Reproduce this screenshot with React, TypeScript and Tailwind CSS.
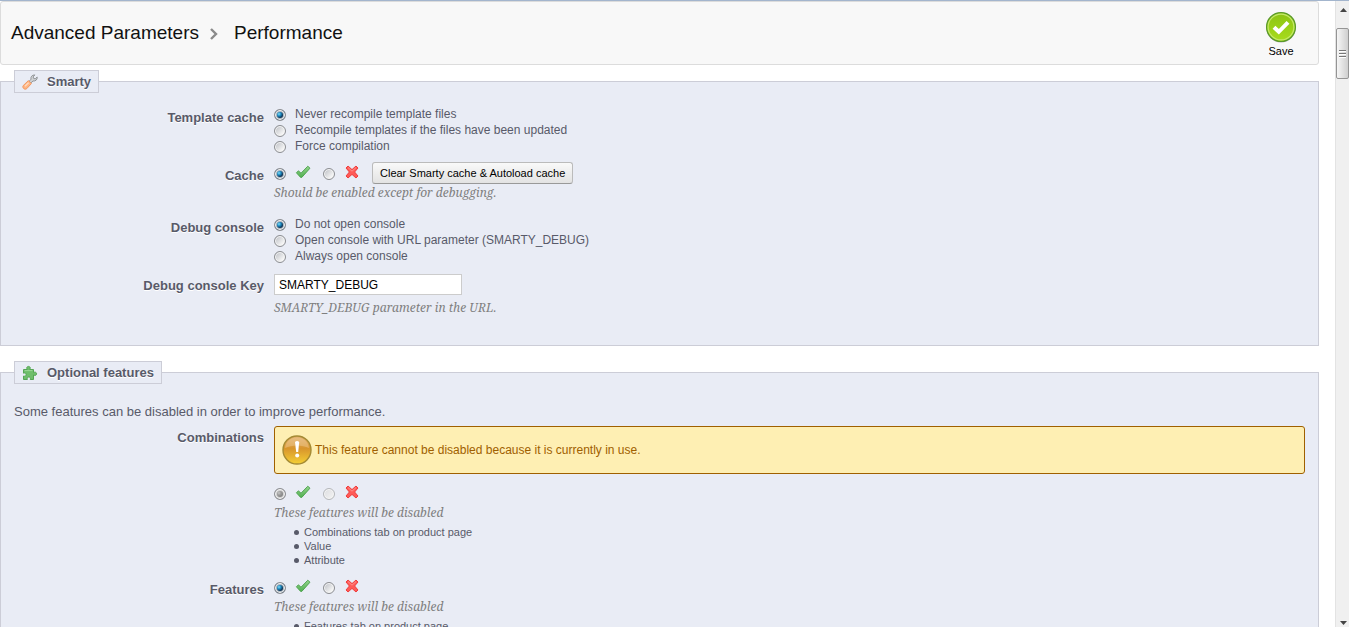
import React from 'react';

interface RadioProps {
  name: string;
  label?: string;
  checked?: boolean;
  disabled?: boolean;
}

const Radio: React.FC<RadioProps> = ({ name, label, checked, disabled }) => (
  <input
    type="radio"
    name={name}
    aria-label={label}
    defaultChecked={checked}
    disabled={disabled}
    className="mt-0.5 size-3 shrink-0 appearance-none rounded-full border border-[#8c8e92] bg-[linear-gradient(135deg,#b9bcc2,#f4f4f4_75%)] shadow-[inset_0_0_0_1px_#f6f6f6] checked:bg-[radial-gradient(circle_at_4px_4px,#7fe0fb_0px,#1c86bd_2px,#0c2c4c_4px)] checked:shadow-[inset_0_0_0_1px_#f6f6f6,inset_0_0_0_2px_#a9b4be] disabled:border-[#b5b7ba] disabled:bg-[linear-gradient(135deg,#dcdde0,#f4f4f4)] disabled:checked:border-[#8c8e92] disabled:checked:bg-[radial-gradient(circle_at_4px_4px,#c8c8c8_0px,#9c9c9c_2px,#858585_4px)] disabled:checked:shadow-[inset_0_0_0_1px_#f6f6f6,inset_0_0_0_2px_#d0d0d0]"
  />
);

const CheckIcon = () => (
  <svg width="16" height="16" viewBox="0 0 16 16" className="mb-0.5" aria-hidden="true">
    <defs>
      <linearGradient id="check" x1="0" y1="0" x2="0" y2="1">
        <stop offset="0" stopColor="#93d48a" />
        <stop offset="1" stopColor="#52b052" />
      </linearGradient>
    </defs>
    <path
      d="M1.4 8.8 3.4 6.8 6 9.2 12.8 2.2 15 4.2 6.8 13.4 5.6 13.4Z"
      fill="url(#check)"
      stroke="#4a9f4b"
      strokeWidth=".9"
      strokeLinejoin="round"
    />
  </svg>
);

const CrossIcon = () => (
  <svg width="16" height="16" viewBox="0 0 16 16" className="mb-0.5" aria-hidden="true">
    <path
      d="M4 2 8 5.6 12 2 14 4 10.6 8 14 12 12 14 8 10.4 4 14 2 12 5.4 8 2 4Z"
      fill="#ff5a56"
      stroke="#ee3e3e"
      strokeLinejoin="round"
    />
    <path d="M4 3.6 8 7.2 12 3.6" fill="none" stroke="#ff8f8a" />
  </svg>
);

const WrenchIcon = () => (
  <svg width="16" height="16" viewBox="0 0 16 16" aria-hidden="true">
    <path
      d="M7 7.4 9 5.2C8.4 3 10 .8 12.8.9L11.2 2.9 11.6 4.4 13.2 4.8 15.2 3C15.6 5.6 13.4 7.4 11 7L8.8 9Z"
      fill="#d0d2d4"
      stroke="#8b8e92"
      strokeWidth=".9"
      strokeLinejoin="round"
    />
    <path d="M6.4 6.6 9.4 9.6 4.8 14.6C2.8 16.4-.2 13.8 1.2 11.6Z" fill="#ffb583" stroke="#f0935a" strokeWidth=".9" />
    <path d="M3 12.2 6.6 8.7" stroke="#ffdcc2" strokeWidth="1.2" />
  </svg>
);

const PuzzleIcon = () => (
  <svg width="16" height="16" viewBox="0 0 16 16" aria-hidden="true">
    <path
      d="M1.5 4.5H5.2C4.2 2.6 5 1.4 6.5 1.4S8.8 2.6 7.8 4.5H11.5V7.6C13.2 6.6 14.6 7.4 14.6 8.8S13.2 11 11.5 10V14.5H8.2C8.8 12.8 8 12 6.8 12S4.8 12.8 5.4 14.5H1.5V11C3.2 11.6 4.1 10.8 4.1 9.6S3.2 7.6 1.5 8.2Z"
      fill="#6fbe6c"
      stroke="#55a655"
      strokeLinejoin="round"
    />
    <path d="M2.6 5.6H10.4" stroke="#9bd896" />
  </svg>
);

const SaveIcon = () => (
  <svg width="32" height="32" viewBox="0 0 32 32" aria-hidden="true">
    <defs>
      <linearGradient id="save" x1="0" y1="0" x2="0" y2="1">
        <stop offset="0" stopColor="#8cc414" />
        <stop offset="1" stopColor="#a8dc1c" />
      </linearGradient>
    </defs>
    <circle cx="16" cy="17" r="14.6" fill="#b4b4b4" />
    <circle cx="16" cy="16" r="14.4" fill="url(#save)" stroke="#5b9a2a" strokeWidth="1.3" />
    <circle cx="16" cy="16" r="12.9" fill="none" stroke="#c5e86c" strokeWidth="1.2" />
    <path d="M9 16.2 13.8 20.8 23 11.4" fill="none" stroke="#fff" strokeWidth="4" />
  </svg>
);

const WarnIcon = () => (
  <svg width="30" height="30" viewBox="0 0 30 30" aria-hidden="true">
    <defs>
      <linearGradient id="warn" x1="0" y1="0" x2="0" y2="1">
        <stop offset="0" stopColor="#e2b070" />
        <stop offset=".45" stopColor="#d8952c" />
        <stop offset="1" stopColor="#f4cf35" />
      </linearGradient>
    </defs>
    <circle cx="15" cy="15" r="14" fill="url(#warn)" stroke="#a48a34" strokeWidth="1.4" />
    <path d="M3 13C4 5 10 2.4 15 2.4S26 5 27 13C20 9.5 10 9.5 3 13Z" fill="#f0cf9c" opacity=".45" />
    <path d="M13 7Q15 5 17.2 7L16.2 17H14.2Z" fill="#fff" />
    <circle cx="15.2" cy="20.6" r="2" fill="#fff" />
  </svg>
);

interface RowProps {
  title: string;
  htmlFor?: string;
  tall?: boolean;
  className?: string;
  children: React.ReactNode;
}

const Row: React.FC<RowProps> = ({ title, htmlFor, tall, className = '', children }) => {
  const titleClass = `w-[250px] shrink-0 text-right text-[13px] leading-4 font-bold [text-shadow:0_1px_0_#fff] ${
    tall ? 'pt-[6px]' : 'pt-1'
  }`;
  return (
    <div role="group" aria-label={title} className={`flex gap-[10px] ${className}`}>
      {htmlFor ? (
        <label htmlFor={htmlFor} className={titleClass}>{title}</label>
      ) : (
        <div className={titleClass}>{title}</div>
      )}
      <div className="min-w-0 flex-1">{children}</div>
    </div>
  );
};

const Hint: React.FC<{ className?: string; children: React.ReactNode }> = ({ className = 'mt-px', children }) => (
  <p className={`font-['Georgia','Noto_Serif','DejaVu_Serif',serif] text-[12px] leading-4 text-[#7f7f7f] italic ${className}`}>
    {children}
  </p>
);

const RadioList: React.FC<{ name: string; options: string[] }> = ({ name, options }) => (
  <>
    {options.map((option, i) => (
      <label key={option} className="flex items-center gap-[9px] leading-4">
        <Radio name={name} checked={i === 0} />
        {option}
      </label>
    ))}
  </>
);

const Switch: React.FC<{ name: string; disabled?: boolean; children?: React.ReactNode }> = ({ name, disabled, children }) => (
  <div className="flex h-[22px] items-center gap-3">
    <label className="flex items-center gap-[9px]">
      <Radio name={name} label="Enabled" checked disabled={disabled} />
      <CheckIcon />
    </label>
    <label className="flex items-center gap-[9px]">
      <Radio name={name} label="Disabled" disabled={disabled} />
      <CrossIcon />
    </label>
    {children}
  </div>
);

const FeatureList: React.FC<{ items: string[] }> = ({ items }) => (
  <ul className="mt-1 pl-5 text-[11px] leading-[14px]">
    {items.map((item) => (
      <li
        key={item}
        className="flex items-center gap-[5px] before:size-[5px] before:rounded-full before:bg-[#585a69] before:content-['']"
      >
        {item}
      </li>
    ))}
  </ul>
);

interface PanelProps {
  title: string;
  icon: React.ReactNode;
  className?: string;
  children: React.ReactNode;
}

const Panel: React.FC<PanelProps> = ({ title, icon, className = '', children }) => (
  <fieldset className={`border border-[#cccdd7] bg-[#e9ecf5] px-[13px] ${className}`}>
    <legend className="flex h-[23px] items-center gap-[9px] border border-[#cccdd7] bg-[#e9ecf5] px-[7px] text-[13px] font-bold [text-shadow:0_1px_0_#fff]">
      {icon}
      {title}
    </legend>
    {children}
  </fieldset>
);

const ScrollBar = () => (
  <div aria-hidden="true" className="flex w-[14px] shrink-0 flex-col items-center border-l border-[#e3e3e3] bg-[#f0f0f0]">
    <svg width="12" height="27" viewBox="0 0 12 27">
      <path d="M3 11 6.5 7 10 11Z" fill="#444" />
    </svg>
    <div className="flex h-[51px] w-full flex-col items-center justify-center gap-px rounded-xs border border-[#959595] bg-linear-to-r from-[#f6f6f6] to-[#cfcfcf]">
      <div className="h-0.5 w-[7px] border-b border-white bg-[#777]" />
      <div className="h-0.5 w-[7px] border-b border-white bg-[#777]" />
      <div className="h-0.5 w-[7px] border-b border-white bg-[#777]" />
    </div>
    <svg width="12" height="10" viewBox="0 0 12 10" className="mt-auto">
      <path d="M3 4 6.5 8 10 4Z" fill="#444" />
    </svg>
  </div>
);

export default function App() {
  return (
    <div className="flex h-screen flex-col overflow-hidden border-t border-[#a3b5cd] bg-white font-['Liberation_Sans',Arial,sans-serif] text-[12px] text-[#585a69]">
      <div className="flex min-h-0 flex-1">
        <main className="min-w-0 flex-1 overflow-hidden pr-4">
          <header className="flex h-16 items-center justify-between rounded-[3px] border border-[#dcdcdc] bg-[#f8f8f8] pr-[21px] pl-[10px]">
            <h1 className="flex items-center text-[19px] text-[#111]">
              Advanced Parameters
              <svg width="8" height="14" viewBox="0 0 8 14" className="mt-0.5 mr-4 ml-[11px]" aria-hidden="true">
                <path d="M1 2 6 7 1 12" fill="none" stroke="#8a8a8a" strokeWidth="2.4" />
              </svg>
              Performance
            </h1>
            <button type="button" className="mt-1 flex flex-col items-center text-[11px] leading-4 text-black">
              <SaveIcon />
              Save
            </button>
          </header>

          <Panel title="Smarty" className="mt-[5px] pb-[29px]" icon={<WrenchIcon />}>
            <Row title="Template cache" className="pt-[13px]">
              <RadioList
                name="smarty_force_compile"
                options={[
                  'Never recompile template files',
                  'Recompile templates if the files have been updated',
                  'Force compilation',
                ]}
              />
            </Row>
            <Row title="Cache" tall className="mt-2">
              <Switch name="smarty_cache">
                <button
                  type="button"
                  className="h-[22px] rounded-[3px] border border-[#bbb] border-b-[#999] bg-linear-to-b from-[#f9f9f9] to-[#e3e3e3] px-[7px] text-[11px] text-black"
                >
                  Clear Smarty cache &amp; Autoload cache
                </button>
              </Switch>
              <Hint>Should be enabled except for debugging.</Hint>
            </Row>
            <Row title="Debug console" className="mt-[15px]">
              <RadioList
                name="smarty_console"
                options={['Do not open console', 'Open console with URL parameter (SMARTY_DEBUG)', 'Always open console']}
              />
            </Row>
            <Row title="Debug console Key" htmlFor="smarty_console_key" className="mt-[10px]">
              <input
                id="smarty_console_key"
                type="text"
                defaultValue="SMARTY_DEBUG"
                className="block h-[21px] w-[188px] border border-[#ccc] bg-white px-1 text-[12px] text-black"
              />
              <Hint className="mt-[5px]">SMARTY_DEBUG parameter in the URL.</Hint>
            </Row>
          </Panel>

          <Panel title="Optional features" className="mt-[15px] pb-[29px]" icon={<PuzzleIcon />}>
            <p className="pt-5 text-[13px] leading-4">Some features can be disabled in order to improve performance.</p>
            <Row title="Combinations" className="mt-[6px]">
              <div className="mb-2 flex h-12 items-center gap-[3px] rounded-[3px] border border-[#9f6000] bg-[#feefb3] px-[7px] text-[#9f6000]">
                <WarnIcon />
                This feature cannot be disabled because it is currently in use.
              </div>
              <Switch name="feature_combination" disabled />
              <Hint>These features will be disabled</Hint>
              <FeatureList items={['Combinations tab on product page', 'Value', 'Attribute']} />
            </Row>
            <Row title="Features" tall className="mt-[9px]">
              <Switch name="feature_feature" />
              <Hint>These features will be disabled</Hint>
              <FeatureList items={['Features tab on product page', 'Feature', 'Feature value']} />
            </Row>
          </Panel>
        </main>
        <ScrollBar />
      </div>
    </div>
  );
}
